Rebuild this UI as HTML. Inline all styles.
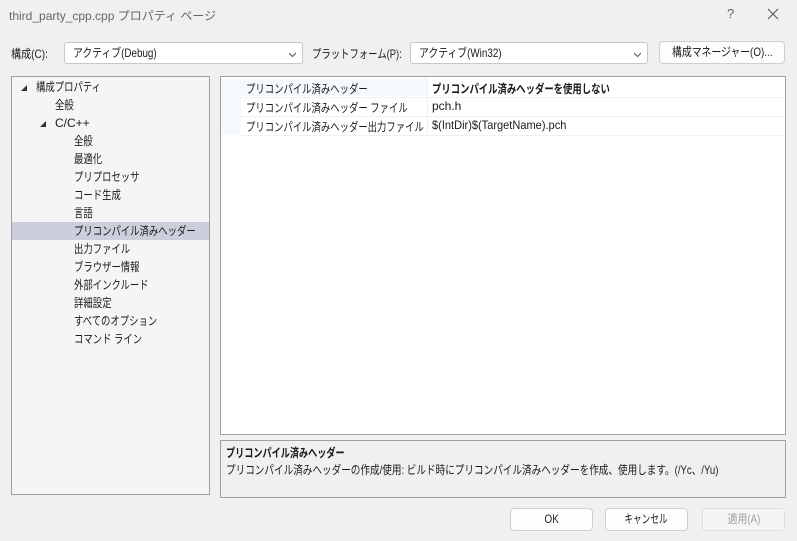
<!DOCTYPE html>
<html><head><meta charset="utf-8"><style>
*{box-sizing:border-box;margin:0;padding:0}
body{width:797px;height:541px;background:#f0f0f0;font-family:"Liberation Sans","Noto Sans CJK JP",sans-serif;font-size:12px;color:#1a1a1a;position:relative;overflow:hidden}
.a{position:absolute;white-space:nowrap;transform-origin:0 50%}
.s{transform:scaleX(.78)}
.m{transform:scaleX(.84)}
.combo{position:absolute;background:#fff;border:1px solid #c8c8c8;border-radius:3px;height:22px;line-height:20px;padding-left:8px}
.combo span{display:inline-block;transform:scaleX(.82);transform-origin:0 50%}
.chev{position:absolute;right:6px;top:8px;width:7px;height:7px}
.btn{position:absolute;background:#fdfdfd;border:1px solid #cfcfcf;border-radius:4px;height:23px;line-height:21px;text-align:center;white-space:nowrap}
.btn span{display:inline-block;transform:scaleX(.82)}
.tree{position:absolute;left:11px;top:76px;width:199px;height:419px;background:#f5f5f5;border:1px solid #a0a0a0}
.ti{position:absolute;height:18px;line-height:18px;white-space:nowrap;transform:scaleX(.78);transform-origin:0 50%}
.tri{position:absolute;width:0;height:0;border-left:6px solid transparent;border-bottom:6px solid #333}
.grid{position:absolute;left:220px;top:76px;width:566px;height:359px;background:#fff;border:1px solid #a0a0a0}
.desc{position:absolute;left:220px;top:440px;width:566px;height:58px;background:#f0f0f0;border:1px solid #a0a0a0}
</style></head><body>
<div class="a" style="left:9px;top:7px;color:#666;font-size:12px">third_party_cpp.cpp プロパティ ページ</div>
<div class="a" style="left:727px;top:6px;color:#666;font-size:13px">?</div>
<svg class="a" style="left:767px;top:8px" width="12" height="12"><path d="M1 1L11 11M11 1L1 11" stroke="#555" stroke-width="1.1"/></svg>

<div class="a m" style="left:11px;top:45px">構成(C):</div>
<div class="combo" style="left:64px;top:42px;width:239px"><span>アクティブ(Debug)</span><svg class="chev" viewBox="0 0 7 7"><path d="M0 2L3.5 5.5L7 2" stroke="#555" fill="none"/></svg></div>
<div class="a" style="left:312px;top:45px;transform:scaleX(.78)">プラットフォーム(P):</div>
<div class="combo" style="left:410px;top:42px;width:238px"><span>アクティブ(Win32)</span><svg class="chev" viewBox="0 0 7 7"><path d="M0 2L3.5 5.5L7 2" stroke="#555" fill="none"/></svg></div>
<div class="btn" style="left:659px;top:41px;width:126px"><span>構成マネージャー(O)...</span></div>

<div class="tree">
<div style="position:absolute;left:0;top:145px;width:197px;height:18px;background:#cccedb"></div>
<div class="tri" style="left:9px;top:8px"></div>
<div class="ti" style="left:24px;top:1px">構成プロパティ</div>
<div class="ti" style="left:43px;top:19px">全般</div>
<div class="tri" style="left:28px;top:44px"></div>
<div class="ti" style="left:43px;top:37px;transform:none">C/C++</div>
<div class="ti" style="left:62px;top:55px">全般</div>
<div class="ti" style="left:62px;top:73px">最適化</div>
<div class="ti" style="left:62px;top:91px">プリプロセッサ</div>
<div class="ti" style="left:62px;top:109px">コード生成</div>
<div class="ti" style="left:62px;top:127px">言語</div>
<div class="ti" style="left:62px;top:145px">プリコンパイル済みヘッダー</div>
<div class="ti" style="left:62px;top:163px">出力ファイル</div>
<div class="ti" style="left:62px;top:181px">ブラウザー情報</div>
<div class="ti" style="left:62px;top:199px">外部インクルード</div>
<div class="ti" style="left:62px;top:217px">詳細設定</div>
<div class="ti" style="left:62px;top:235px">すべてのオプション</div>
<div class="ti" style="left:62px;top:253px">コマンド ライン</div>
</div>

<div class="grid">
<div class="a" style="left:0;top:1px;width:20px;height:57px;background:#f5f8fc"></div>
<div class="a" style="left:20px;top:1px;width:186px;height:18px;background:#f5f8fc"></div>
<div class="a" style="left:206px;top:1px;width:1px;height:57px;background:#f0f0f0"></div>
<div class="a" style="left:20px;top:20px;width:544px;height:1px;background:#f0f0f0"></div>
<div class="a" style="left:20px;top:39px;width:544px;height:1px;background:#f0f0f0"></div>
<div class="a" style="left:20px;top:58px;width:544px;height:1px;background:#f0f0f0"></div>
<div class="a s" style="left:25px;top:3px">プリコンパイル済みヘッダー</div>
<div class="a s" style="left:25px;top:22px">プリコンパイル済みヘッダー ファイル</div>
<div class="a s" style="left:25px;top:41px">プリコンパイル済みヘッダー出力ファイル</div>
<div class="a" style="left:211px;top:3px;font-weight:bold;transform:scaleX(.78)">プリコンパイル済みヘッダーを使用しない</div>
<div class="a" style="left:211px;top:22px">pch.h</div>
<div class="a" style="left:211px;top:41px;transform:scaleX(.92)">$(IntDir)$(TargetName).pch</div>
</div>

<div class="desc">
<div class="a" style="left:5px;top:3px;font-weight:bold;transform:scaleX(.76)">プリコンパイル済みヘッダー</div>
<div class="a" style="left:5px;top:20px;transform:scaleX(.8)">プリコンパイル済みヘッダーの作成/使用: ビルド時にプリコンパイル済みヘッダーを作成、使用します。(/Yc、/Yu)</div>
</div>

<div class="btn" style="left:510px;top:508px;width:83px"><span>OK</span></div>
<div class="btn" style="left:605px;top:508px;width:83px"><span style="transform:scaleX(.72)">キャンセル</span></div>
<div class="btn" style="left:702px;top:508px;width:83px;background:#f5f5f5;border-color:#e0e0e0;color:#a0a0a0"><span>適用(A)</span></div>
</body></html>
